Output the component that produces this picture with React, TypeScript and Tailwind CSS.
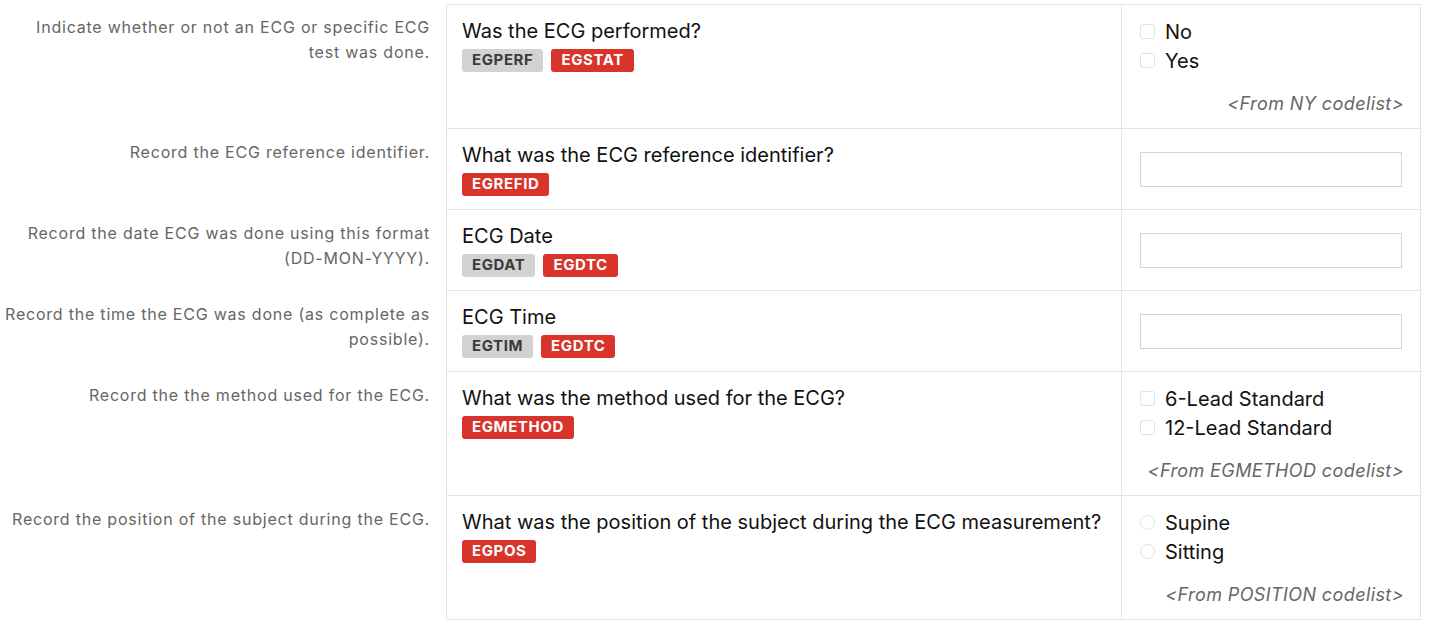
import React from "react";

type Badge = { text: string; red: boolean };
type Row = {
  help: string;
  question: string;
  badges: Badge[];
  kind: "check" | "radio" | "input";
  options?: string[];
  codelist?: string;
};

const rows: Row[] = [
  {
    help: "Indicate whether or not an ECG or specific ECG test was done.",
    question: "Was the ECG performed?",
    badges: [
      { text: "EGPERF", red: false },
      { text: "EGSTAT", red: true },
    ],
    kind: "check",
    options: ["No", "Yes"],
    codelist: "<From NY codelist>",
  },
  {
    help: "Record the ECG reference identifier.",
    question: "What was the ECG reference identifier?",
    badges: [{ text: "EGREFID", red: true }],
    kind: "input",
  },
  {
    help: "Record the date ECG was done using this format (DD-MON-YYYY).",
    question: "ECG Date",
    badges: [
      { text: "EGDAT", red: false },
      { text: "EGDTC", red: true },
    ],
    kind: "input",
  },
  {
    help: "Record the time the ECG was done (as complete as possible).",
    question: "ECG Time",
    badges: [
      { text: "EGTIM", red: false },
      { text: "EGDTC", red: true },
    ],
    kind: "input",
  },
  {
    help: "Record the the method used for the ECG.",
    question: "What was the method used for the ECG?",
    badges: [{ text: "EGMETHOD", red: true }],
    kind: "check",
    options: ["6-Lead Standard", "12-Lead Standard"],
    codelist: "<From EGMETHOD codelist>",
  },
  {
    help: "Record the position of the subject during the ECG.",
    question: "What was the position of the subject during the ECG measurement?",
    badges: [{ text: "EGPOS", red: true }],
    kind: "radio",
    options: ["Supine", "Sitting"],
    codelist: "<From POSITION codelist>",
  },
];

export default function App() {
  return (
    <div
      className="w-[1429px] h-[625px] bg-white overflow-hidden pt-[4px]"
      style={{ fontFamily: "Inter, 'Liberation Sans', sans-serif" }}
    >
      <div className="flex flex-col">
        {rows.map((r, i) => (
          <div key={i} className="flex">
            <div className="w-[446px] shrink-0 pr-[16px] pt-[11px] text-right text-[16px] leading-[25px] text-[#666] tracking-[0.78px]">
              {r.help}
            </div>
            <div
              className={`w-[675px] shrink-0 border-l border-b border-[#e4e4e4] pl-[15px] pr-[12px] pt-[14px] pb-[13px] ${
                i === 0 ? "border-t" : ""
              }`}
            >
              <div className="text-[20px] leading-[25px] text-[#111]">{r.question}</div>
              <div className="flex gap-[8px] mt-[5px]">
                {r.badges.map((b, j) => (
                  <span
                    key={j}
                    className={`inline-flex items-center h-[23px] px-[10px] rounded-[3px] text-[15px] font-bold tracking-[0.6px] ${
                      b.red ? "bg-[#d8342c] text-white" : "bg-[#d2d2d2] text-[#3a3a3a]"
                    }`}
                  >
                    {b.text}
                  </span>
                ))}
              </div>
            </div>
            <div
              className={`w-[300px] shrink-0 border-l border-r border-b border-[#e4e4e4] ${
                i === 0 ? "border-t" : ""
              } ${r.kind === "input" ? "flex items-center pl-[18px] pr-[18px]" : "pl-[18px] pr-[16px] pt-[12px] pb-[12px]"}`}
            >
              {r.kind === "input" ? (
                <div className="w-full h-[35px] border border-[#d4d4d4] bg-white" />
              ) : (
                <div>
                  {r.options!.map((o, j) => (
                    <div key={j} className="flex items-center h-[29px] text-[20px] text-[#111]">
                      <span
                        className={`w-[15px] h-[15px] mr-[10px] border border-[#e0e0e0] bg-white ${
                          r.kind === "radio" ? "rounded-full" : "rounded-[3px]"
                        }`}
                      />
                      {o}
                    </div>
                  ))}
                  <div className="mt-[17px] text-right italic text-[18px] leading-[24px] tracking-[0.4px] text-[#666]">
                    {r.codelist}
                  </div>
                </div>
              )}
            </div>
          </div>
        ))}
      </div>
    </div>
  );
}
